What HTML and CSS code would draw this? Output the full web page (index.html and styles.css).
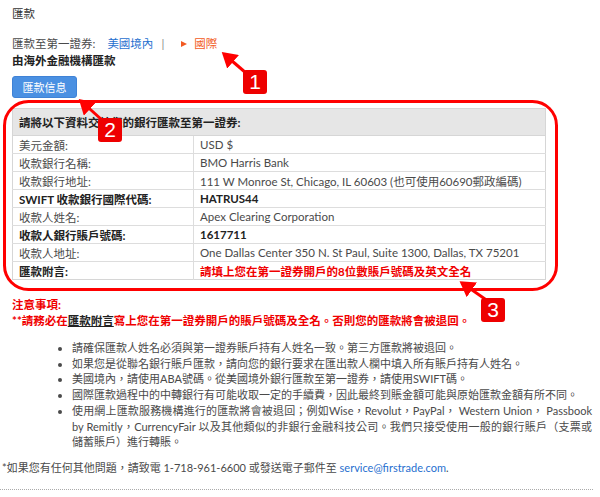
FILE: index.html
```html
<!DOCTYPE html>
<html lang="zh-Hant">
<head>
    <meta charset="UTF-8">
    <meta name="viewport" content="width=device-width, initial-scale=1.0">
    <title>匯款 - 第一證券</title>
    <link rel="stylesheet" href="styles.css">
</head>
<body>
    <div class="page">
        <div class="title">匯款</div>

        <div class="nav">
            <span class="nav-label">匯款至第一證券:</span>
            <a class="nav-link" href="#">美國境內</a>
            <span class="nav-sep">|</span>
            <span class="nav-current"><span class="tri"></span>國際</span>
        </div>
        <div class="subtitle">由海外金融機構匯款</div>

        <button class="tab-btn" type="button">匯款信息</button>

        <table class="info">
            <thead>
                <tr><th colspan="2">請將以下資料交給您的銀行匯款至第一證券:</th></tr>
            </thead>
            <tbody>
                <tr><td>美元金額:</td><td>USD $</td></tr>
                <tr><td>收款銀行名稱:</td><td>BMO Harris Bank</td></tr>
                <tr><td>收款銀行地址:</td><td>111 W Monroe St, Chicago, IL 60603 (也可使用60690郵政編碼)</td></tr>
                <tr class="strong"><td>SWIFT 收款銀行國際代碼:</td><td>HATRUS44</td></tr>
                <tr><td>收款人姓名:</td><td>Apex Clearing Corporation</td></tr>
                <tr class="strong"><td>收款人銀行賬戶號碼:</td><td>1617711</td></tr>
                <tr><td>收款人地址:</td><td>One Dallas Center 350 N. St Paul, Suite 1300, Dallas, TX 75201</td></tr>
                <tr class="strong"><td>匯款附言:</td><td class="alert">請填上您在第一證券開戶的8位數賬戶號碼及英文全名</td></tr>
            </tbody>
        </table>

        <div class="notes">
            <div class="notes-title">注意事項:</div>
            <div class="notes-warn">**請務必在<span class="ul">匯款附言</span>寫上您在第一證券開戶的賬戶號碼及全名。否則您的匯款將會被退回。</div>
            <ul class="notes-list">
                <li>請確保匯款人姓名必須與第一證券賬戶持有人姓名一致。第三方匯款將被退回。</li>
                <li>如果您是從聯名銀行賬戶匯款，請向您的銀行要求在匯出款人欄中填入所有賬戶持有人姓名。</li>
                <li>美國境內，請使用ABA號碼。從美國境外銀行匯款至第一證券，請使用SWIFT碼。</li>
                <li>國際匯款過程中的中轉銀行有可能收取一定的手續費，因此最終到賬金額可能與原始匯款金額有所不同。</li>
                <li>使用網上匯款服務機構進行的匯款將會被退回；例如Wise，Revolut，PayPal， Western Union， Passbook by Remitly，CurrencyFair 以及其他類似的非銀行金融科技公司。我們只接受使用一般的銀行賬戶（支票或儲蓄賬戶）進行轉賬。</li>
            </ul>
        </div>

        <p class="contact">*如果您有任何其他問題，請致電 1-718-961-6600 或發送電子郵件至 <a href="#">service@firstrade.com</a>.</p>
        <div class="dotted"></div>
    </div>

    <!-- annotations drawn on top of the screenshot -->
    <svg class="marks" width="600" height="497" viewBox="0 0 600 497">
        <defs>
            <marker id="head" markerWidth="6" markerHeight="6" refX="4" refY="3" orient="auto" markerUnits="strokeWidth">
                <path d="M0,0 L5,3 L0,6 Z" fill="#f00"/>
            </marker>
        </defs>
        <rect x="4.5" y="101.5" width="552" height="188" rx="24" fill="none" stroke="#f00" stroke-width="3"/>
        <line x1="246" y1="73" x2="224" y2="54" stroke="#f00" stroke-width="3" marker-end="url(#head)"/>
        <line x1="102" y1="120" x2="81" y2="101" stroke="#f00" stroke-width="3" marker-end="url(#head)"/>
        <line x1="485" y1="299" x2="462" y2="283" stroke="#f00" stroke-width="3" marker-end="url(#head)"/>
    </svg>
    <div class="badge b1">1</div>
    <div class="badge b2">2</div>
    <div class="badge b3">3</div>
</body>
</html>
```

FILE: styles.css
```css
:root {
    --text: #333333;
    --muted: #4a4a4a;
    --blue: #1f6fcf;
    --red: #f00000;
    --border: #dddddd;
}

body {
    margin: 0;
    font-family: Lato, "Noto Sans CJK TC", sans-serif;
    font-size: 12px;
    color: var(--text);
    background: #ffffff;
}

.page {
    padding: 6px 8px 0 12px;
}

.title {
    line-height: 16px;
    font-size: 11.5px;
}

.nav {
    margin-top: 13px;
    line-height: 17px;
    font-size: 11.5px;
    display: flex;
    align-items: center;
}

.nav-label {
    color: var(--muted);
}

.nav-link {
    color: var(--blue);
    text-decoration: none;
    margin-left: 12px;
}

.nav-sep {
    color: #888;
    margin-left: 8px;
}

.nav-current {
    color: #f25a22;
    margin-left: 17px;
    display: flex;
    align-items: center;
}

.tri {
    width: 0;
    height: 0;
    border-left: 6px solid #f25a22;
    border-top: 3.5px solid transparent;
    border-bottom: 3.5px solid transparent;
    margin-right: 7px;
}

.subtitle {
    line-height: 17px;
    font-size: 11.5px;
    font-weight: bold;
    color: #222;
}

.tab-btn {
    display: block;
    margin-top: 7px;
    height: 22px;
    width: 65px;
    padding: 0;
    border: 1px solid #3f82d6;
    border-radius: 3px;
    background: #4a90e2;
    color: #fff;
    font-family: inherit;
    font-size: 11px;
}

.info {
    margin-top: 10px;
    width: 534px;
    border-collapse: collapse;
    border: 1px solid #d6d6d6;
    font-size: 11.5px;
}

.info th {
    background: #e6e6e6;
    text-align: left;
    height: 26px;
    padding: 0 6px;
    font-weight: bold;
    color: #222;
    border-bottom: 1px solid #d6d6d6;
}

.info td {
    height: 17px;
    padding: 0 6px;
    border-top: 1px solid var(--border);
    color: var(--muted);
    white-space: nowrap;
}

.info td:first-child {
    width: 168px;
    border-right: 1px solid var(--border);
}

.info tr.strong td {
    font-weight: bold;
    color: #222;
}

.info tr.strong td.alert {
    color: var(--red);
}

.notes {
    margin-top: 17px;
}

.notes-title,
.notes-warn {
    color: var(--red);
    font-weight: bold;
    font-size: 11.5px;
    line-height: 16px;
}

.notes-warn .ul {
    color: #222;
    text-decoration: underline;
}

.notes-list {
    margin: 11px 0 0;
    padding-left: 60px;
    font-size: 11px;
    line-height: 15.7px;
    color: var(--muted);
    text-align: justify;
}

.contact {
    margin: 10px 0 0 -10px;
    font-size: 11px;
    line-height: 16px;
    color: var(--muted);
}

.contact a {
    color: var(--blue);
    text-decoration: none;
}

.dotted {
    margin: 13px 0 0 -12px;
    border-top: 1px dotted #aaaaaa;
    width: 593px;
}

/* annotation layer */
.marks {
    position: absolute;
    left: 0;
    top: 0;
    pointer-events: none;
}

.badge {
    position: absolute;
    width: 24px;
    height: 24px;
    border-radius: 3px;
    background: #ee0000;
    color: #fff;
    font-family: "Liberation Sans", sans-serif;
    font-size: 21px;
    line-height: 24px;
    text-align: center;
}

.b1 { left: 243px; top: 70px; }
.b2 { left: 98px; top: 118px; }
.b3 { left: 481px; top: 298px; }
```
